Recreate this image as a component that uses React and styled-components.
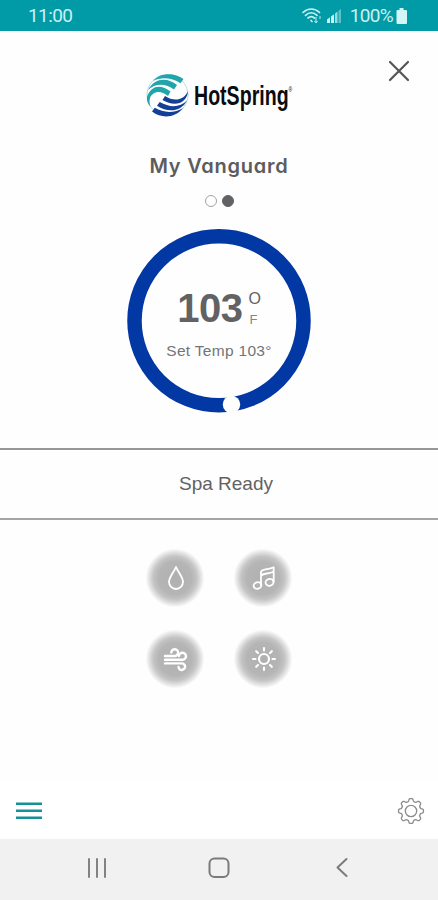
import React from "react";
import styled, { createGlobalStyle } from "styled-components";

const GlobalStyle = createGlobalStyle`
  *, *::before, *::after {
    box-sizing: border-box;
  }

  body {
    margin: 0;
    background-color: #fff;
    font-family: "Liberation Sans", Arial, sans-serif;
  }

  h1, p {
    margin: 0;
  }

  button {
    border: none;
    padding: 0;
    background: none;
  }

  svg {
    display: block;
  }
`;

const Screen = styled.div`
  width: 100%;
  height: 900px;
  display: flex;
  flex-direction: column;
  background-color: #fefefe;
  overflow: hidden;
`;

const StatusBar = styled.header`
  height: 31px;
  flex-shrink: 0;
  display: flex;
  align-items: center;
  justify-content: space-between;
  padding: 0 30px 0 28px;
  background-color: #019ba8;
  color: #c9f1f3;
  font-family: Roboto, sans-serif;
  font-size: 19px;
  letter-spacing: -0.6px;
`;

const StatusIcons = styled.div`
  display: flex;
  align-items: center;
`;

const Percent = styled.span`
  font-size: 19px;
  letter-spacing: -0.7px;
  margin: 0 3px 0 8px;
`;

const TopRow = styled.div`
  height: 96px;
  flex-shrink: 0;
  display: grid;
  grid-template-columns: 1fr 146px 1fr;
  padding-top: 29px;
`;

const Logo = styled.div`
  grid-column: 2;
  display: flex;
  align-items: center;
  height: 70px;
`;

const LogoText = styled.span`
  width: 93px;
  margin: 1px 0 0 5px;
  color: #0c0c10;
  font-family: "Liberation Sans Narrow", "Liberation Sans", sans-serif;
  font-size: 27px;
  font-weight: 700;
  line-height: 32px;
  white-space: nowrap;
  transform: scaleX(0.725);
  transform-origin: left center;
`;

const Registered = styled.sup`
  font-size: 7px;
  font-weight: 400;
  line-height: 0;
  vertical-align: 13px;
`;

const CloseButton = styled.button`
  justify-self: end;
  align-self: start;
  margin-right: 28px;
`;

const Title = styled.h1`
  height: 30px;
  margin-top: 24px;
  text-align: center;
  color: #5c5c5e;
  font-family: Inter, sans-serif;
  font-size: 20px;
  font-weight: 600;
  line-height: 31px;
  letter-spacing: 0.75px;
  font-feature-settings: "cv11";
`;

const Dots = styled.div`
  display: flex;
  justify-content: center;
  gap: 5px;
  margin-top: 14px;
`;

const Dot = styled.span`
  width: 12px;
  height: 12px;
  border-radius: 50%;
  border: 1px solid ${(props) => (props.$active ? "#626264" : "#a3a3a5")};
  background-color: ${(props) => (props.$active ? "#626264" : "#fff")};
`;

const Dial = styled.div`
  width: 184px;
  height: 184px;
  flex-shrink: 0;
  margin: 22px auto 0;
  display: grid;

  & > * {
    grid-area: 1 / 1;
  }
`;

const Reading = styled.div`
  display: flex;
  flex-direction: column;
  align-items: center;
  padding-top: 56px;
  color: #626264;
`;

const Temperature = styled.div`
  display: flex;
  height: 46px;
`;

const Degrees = styled.span`
  font-size: 40px;
  font-weight: 700;
  line-height: 46px;
  letter-spacing: -0.5px;
`;

const Unit = styled.span`
  display: flex;
  flex-direction: column;
  margin: 4px 0 0 6px;
  font-size: 16px;
  line-height: 20px;
`;

const Scale = styled.span`
  padding-left: 1px;
  font-size: 13px;
  line-height: 21px;
  color: #858587;
`;

const SetTemp = styled.p`
  margin-top: 8px;
  color: #747476;
  font-size: 15.5px;
  line-height: 24px;
  letter-spacing: 0.3px;
`;

const Status = styled.section`
  height: 72px;
  flex-shrink: 0;
  margin-top: 35px;
  display: flex;
  align-items: center;
  justify-content: center;
  padding-left: 14px;
  border-top: 2px solid #979797;
  border-bottom: 2px solid #a5a5a5;
  color: #626264;
  font-size: 19px;
`;

const Controls = styled.section`
  display: grid;
  grid-template-columns: 60px 60px;
  grid-auto-rows: 60px;
  justify-content: center;
  gap: 21px 28px;
  margin-top: 28px;
`;

const Control = styled.button`
  display: flex;
  align-items: center;
  justify-content: center;
  border-radius: 50%;
  background: radial-gradient(
    circle closest-side,
    #b0b0b0 0%,
    #b5b5b5 55%,
    #c4c4c4 72%,
    #e0e0e0 85%,
    rgba(254, 254, 254, 0) 98%
  );
`;

const BottomBar = styled.footer`
  height: 57px;
  margin-top: auto;
  flex-shrink: 0;
  display: flex;
  align-items: center;
  justify-content: space-between;
  padding: 1px 13px 0 16px;
  background-color: #fff;
`;

const SystemNav = styled.nav`
  height: 61px;
  flex-shrink: 0;
  display: grid;
  grid-template-columns: 1fr 1fr 1fr;
  align-items: center;
  justify-items: center;
  padding: 0 35px 4px 36px;
  background-color: #f1f1f1;
`;

const Glyph = styled.svg`
  fill: none;
  stroke: ${(props) => props.$color || "#fff"};
  stroke-width: ${(props) => props.$weight || 1.8};
  stroke-linecap: round;
  stroke-linejoin: round;
`;

const SignalSvg = styled.svg`
  margin-left: 5px;
`;

const WifiIcon = () => (
  <Glyph width="20" height="18" viewBox="0 0 20 18" $color="#c9f1f3" $weight={1.7}>
    <path d="M1 5.500C6 .8 12.500.8 17.500 5.500" />
    <path d="M3.500 8.300C7 5 11.500 5 15 8.300" />
    <path d="M6 11C8 9.200 10.500 9.200 12.500 11" />
    <path d="M9 13.500L10 14.500" />
    <path d="M14 10.500v5M12.700 14.300L14 15.800L15.300 14.300M18 9.500v2" strokeWidth="1" />
  </Glyph>
);

const SignalIcon = () => (
  <SignalSvg width="15" height="15" viewBox="0 0 15 15" fill="#c9f1f3">
    <path d="M0 11.500L3 9.200V15H0z" />
    <path d="M4 8.500L7 6.200V15H4z" />
    <path d="M8 5.500L10.500 3.600V15H8z" opacity=".75" />
    <path d="M11.500 2.800L14 1V15h-2.500z" opacity=".45" />
  </SignalSvg>
);

const BatteryIcon = () => (
  <svg width="12" height="16" viewBox="0 0 12 16" fill="#d3f6f6">
    <path d="M3.500 0h4v2H10a1 1 0 0 1 1 1v12a1 1 0 0 1-1 1H1.500a1 1 0 0 1-1-1V3a1 1 0 0 1 1-1h2z" />
  </svg>
);

const LogoMark = () => (
  <Glyph width="43" height="44" viewBox="0 0 43 44">
    <circle cx="21.500" cy="22" r="20.500" stroke="#a9cfdc" strokeWidth=".8" />
    <g fill="#20a5ad" stroke="none">
      <path d="M7 8C15-1 29 0 37.500 6L34.500 10.200C26 4.500 15 3.500 7 8z" />
      <path d="M2 17C9 4 22 4.500 31 12L28 16.500C20 10 9 10 2 17z" />
      <path d="M1 24C5 12 15 11 24.500 18.500L22 23C15 17 8 18 4.500 23.500C3 27 3.500 31 4.500 34C2 31 .5 28 1 24z" />
    </g>
    <g fill="#123f98" stroke="none">
      <path d="M37 35C29 45 16 46 6 38.500L8.800 34.800C18 40.500 29 40 37 35z" />
      <path d="M41 27.500C35 39 22 40 11 32.800L13.700 29C24 35 34 34.500 41 27.500z" />
      <path d="M42 18C41 31 28 34 16.500 27L19 23C28 29 38 27.500 42 18z" />
    </g>
  </Glyph>
);

const CloseIcon = () => (
  <Glyph width="22" height="22" viewBox="0 0 22 22" $color="#555" $weight={2.2}>
    <path d="M2 2L20 20M20 2L2 20" />
  </Glyph>
);

const DropIcon = () => (
  <Glyph width="28" height="28" viewBox="0 0 28 28">
    <path d="M15 3C12.500 9 8 13 8 18A7 7 0 0 0 22 18C22 13 17.500 9 15 3z" />
  </Glyph>
);

const MusicIcon = () => (
  <Glyph width="28" height="28" viewBox="0 0 28 28">
    <ellipse cx="8.500" cy="21.500" rx="3.900" ry="3.200" transform="rotate(-15 8.500 21.500)" />
    <ellipse cx="20.500" cy="18.300" rx="4" ry="3.400" transform="rotate(-15 20.500 18.300)" />
    <path d="M12 21V7.500C14.500 4.500 19.500 6 24.700 3.300V18M12 11.500C15.500 8.500 19.500 10.500 24.700 7.500" />
  </Glyph>
);

const WindIcon = () => (
  <Glyph width="28" height="28" viewBox="0 0 28 28" $weight={2.400}>
    <path d="M4 11H13.500A3.400 3.400 0 1 0 10.300 7.500" />
    <path d="M4 14.700H21.500A3.500 3.500 0 1 0 18 11" />
    <path d="M4 18.400H20.500A3.300 3.300 0 1 1 17.500 22" />
  </Glyph>
);

const SunIcon = () => (
  <Glyph width="28" height="28" viewBox="0 0 28 28" $weight={2.100}>
    <circle cx="15" cy="14" r="5" />
    <path d="M15 3v2.500M15 22.500V25M4 14h2.500M23.500 14H26M7.200 6.200L9 8M21 20l1.800 1.800M22.800 6.200L21 8M9 20l-1.800 1.800" />
  </Glyph>
);

const MenuIcon = () => (
  <svg width="26" height="18" viewBox="0 0 26 18" fill="#16919a">
    <rect y="0.500" width="26" height="2.500" />
    <rect y="7.500" width="26" height="2.500" />
    <rect y="14.500" width="26" height="2.500" />
  </svg>
);

// eight rounded teeth around the hub
const gearPath = () => {
  const points = [];
  for (let i = 0; i <= 160; i++) {
    const angle = (i / 160) * Math.PI * 2;
    const wave = Math.tanh(2.2 * Math.cos(angle * 8));
    const radius = 11.1 + 1.4 * wave;
    points.push(`${(14 + radius * Math.cos(angle)).toFixed(2)} ${(14 + radius * Math.sin(angle)).toFixed(2)}`);
  }
  return `M${points.join("L")}z`;
};

const GearIcon = () => (
  <Glyph width="28" height="28" viewBox="0 0 28 28" $color="#8b8b8b" $weight={1.3}>
    <path d={gearPath()} />
    <circle cx="14" cy="14" r="5.700" />
  </Glyph>
);

const RecentsIcon = () => (
  <Glyph width="22" height="22" viewBox="0 0 22 22" $color="#828282" $weight={2}>
    <path d="M3 2v18M11 2v18M19 2v18" />
  </Glyph>
);

const HomeIcon = () => (
  <Glyph width="22" height="22" viewBox="0 0 22 22" $color="#7b7b7b" $weight={2}>
    <rect x="1.500" y="1.500" width="19" height="18.500" rx="5" />
  </Glyph>
);

const BackIcon = () => (
  <Glyph width="14" height="22" viewBox="0 0 14 22" $color="#7b7b7b" $weight={2}>
    <path d="M11.500 2L2.500 10.500L11.500 19" />
  </Glyph>
);

const App = () => {
  return (
    <>
      <GlobalStyle />
      <Screen>
        <StatusBar>
          <span>11:00</span>
          <StatusIcons>
            <WifiIcon />
            <SignalIcon />
            <Percent>100%</Percent>
            <BatteryIcon />
          </StatusIcons>
        </StatusBar>

        <TopRow>
          <Logo>
            <LogoMark />
            <LogoText>
              HotSpring<Registered>®</Registered>
            </LogoText>
          </Logo>
          <CloseButton aria-label="Close">
            <CloseIcon />
          </CloseButton>
        </TopRow>

        <Title>My Vanguard</Title>
        <Dots>
          <Dot />
          <Dot $active />
        </Dots>

        <Dial>
          <svg width="184" height="184" viewBox="0 0 184 184">
            <circle cx="92" cy="91.800" r="84.500" fill="none" stroke="#0238a4" strokeWidth="14.500" />
            <circle cx="104.500" cy="175.500" r="8.700" fill="#fefefe" />
          </svg>
          <Reading>
            <Temperature>
              <Degrees>103</Degrees>
              <Unit>
                O<Scale>F</Scale>
              </Unit>
            </Temperature>
            <SetTemp>Set Temp 103°</SetTemp>
          </Reading>
        </Dial>

        <Status>Spa Ready</Status>

        <Controls>
          <Control aria-label="Water">
            <DropIcon />
          </Control>
          <Control aria-label="Music">
            <MusicIcon />
          </Control>
          <Control aria-label="Jets">
            <WindIcon />
          </Control>
          <Control aria-label="Lights">
            <SunIcon />
          </Control>
        </Controls>

        <BottomBar>
          <button aria-label="Menu">
            <MenuIcon />
          </button>
          <button aria-label="Settings">
            <GearIcon />
          </button>
        </BottomBar>

        <SystemNav>
          <RecentsIcon />
          <HomeIcon />
          <BackIcon />
        </SystemNav>
      </Screen>
    </>
  );
};

export default App;
